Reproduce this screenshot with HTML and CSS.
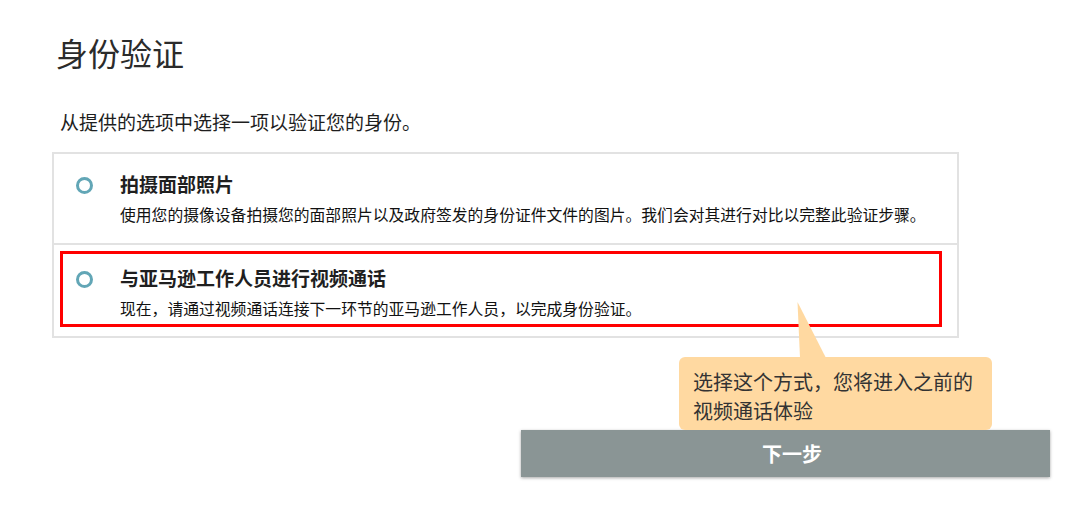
FILE: index.html
```html
<!DOCTYPE html>
<html lang="zh-CN">
<head>
<meta charset="utf-8">
<title>身份验证</title>
<link rel="stylesheet" href="styles.css">
</head>
<body>
<div class="page">
  <h1 class="title">身份验证</h1>
  <p class="lead">从提供的选项中选择一项以验证您的身份。</p>
  <div class="card">
    <div class="option">
      <span class="radio"></span>
      <div class="option-text">
        <div class="option-title">拍摄面部照片</div>
        <div class="option-desc">使用您的摄像设备拍摄您的面部照片以及政府签发的身份证件文件的图片。我们会对其进行对比以完整此验证步骤。</div>
      </div>
    </div>
    <div class="option option-second">
      <div class="highlight">
        <span class="radio"></span>
        <div class="option-text">
          <div class="option-title">与亚马逊工作人员进行视频通话</div>
          <div class="option-desc">现在，请通过视频通话连接下一环节的亚马逊工作人员，以完成身份验证。</div>
        </div>
      </div>
    </div>
  </div>
  <div class="actions">
    <button class="next">下一步</button>
  </div>
  <svg class="pointer" width="40" height="60" viewBox="0 0 40 60"><polygon points="7.5,2 10,58 36,58" fill="#ffd9a1"/></svg>
  <div class="tip">选择这个方式，您将进入之前的<br>视频通话体验</div>
</div>
</body>
</html>
```
FILE: styles.css
```css
html, body {
  margin: 0;
  padding: 0;
  background: #ffffff;
}
body {
  font-family: "Noto Sans CJK SC", "Noto Sans", sans-serif;
  width: 1080px;
  height: 520px;
  overflow: hidden;
}
.page {
  position: relative;
  display: flow-root;
  width: 1080px;
  height: 520px;
}
.title {
  margin: 32px 0 0 56px;
  font-size: 32px;
  line-height: 40px;
  font-weight: 400;
  color: #2b2b2b;
}
.lead {
  margin: 36px 0 0 60px;
  font-size: 19px;
  line-height: 28px;
  color: #1e1e1e;
}
.card {
  box-sizing: border-box;
  margin: 16px 0 0 52px;
  width: 907px;
  border: 2px solid #e2e2e2;
}
.option {
  display: flex;
  align-items: flex-start;
  padding: 17px 0 17px 22px;
}
.option-second {
  display: block;
  padding: 6px 15px 9px 6px;
  border-top: 2px solid #e2e2e2;
}
.highlight {
  display: flex;
  align-items: flex-start;
  border: 3px solid #ff0000;
  padding: 11px 0 4px 13px;
}
.radio {
  flex: none;
  box-sizing: border-box;
  width: 17px;
  height: 17px;
  margin-top: 6px;
  border: 3px solid #62a6b6;
  border-radius: 50%;
  background: #fff;
}
.option-text {
  margin-left: 27px;
}
.option-title {
  font-size: 19px;
  line-height: 26px;
  font-weight: 700;
  color: #1f1f1f;
}
.option-desc {
  margin-top: 7px;
  font-size: 15.8px;
  line-height: 22px;
  color: #111;
}
.actions {
  display: flex;
  justify-content: flex-end;
  margin-top: 92px;
  padding-right: 30px;
}
.next {
  width: 529px;
  height: 47px;
  padding: 0 0 0 13px;
  border: none;
  background: #8a9595;
  box-shadow: 0 1px 3px rgba(0, 0, 0, 0.35);
  color: #ffffff;
  font-family: "Noto Sans CJK SC", "Noto Sans", sans-serif;
  font-size: 20px;
  font-weight: 700;
}
.pointer {
  position: absolute;
  left: 790px;
  top: 300px;
}
.tip {
  position: absolute;
  left: 679px;
  top: 357px;
  box-sizing: border-box;
  width: 313px;
  height: 73px;
  padding: 10px 0 0 14px;
  background: #ffd9a1;
  border-radius: 6px;
  font-size: 20px;
  line-height: 29px;
  color: #333333;
}
```
